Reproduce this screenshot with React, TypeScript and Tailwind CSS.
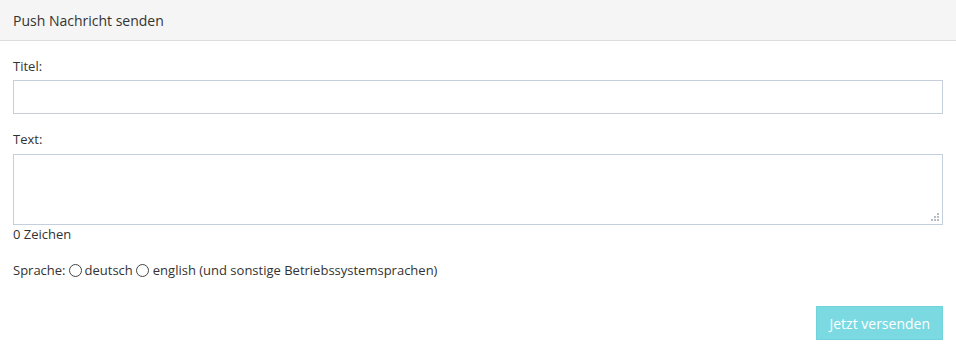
import React from "react";

export default function App() {
  return (
    <div className="w-[956px] h-[354px] bg-white text-[13px] text-[#333]" style={{ fontFamily: '"Open Sans", sans-serif' }}>
      <div className="h-[41px] bg-[#f5f5f5] border-b border-[#dddddd] flex items-center px-[13px] text-[14px] text-[#333]">
        Push Nachricht senden
      </div>
      <div className="px-[13px] pt-[16px]">
        <div className="leading-[18px] mb-[5px]">Titel:</div>
        <input type="text" className="block w-full h-[34px] border border-[#c5cfdc] bg-white outline-none" />
        <div className="leading-[18px] mt-[16px] mb-[6px]">Text:</div>
        <div className="relative">
          <textarea className="block w-full h-[71px] border border-[#c5cfdc] bg-white outline-none resize-none" />
          <svg className="absolute right-[4px] bottom-[4px]" width="8" height="8" viewBox="0 0 8 8">
            <rect x="6" y="0" width="2" height="2" fill="#b8bec8" />
            <rect x="3" y="3" width="2" height="2" fill="#b8bec8" />
            <rect x="6" y="3" width="2" height="2" fill="#b8bec8" />
            <rect x="0" y="6" width="2" height="2" fill="#b8bec8" />
            <rect x="3" y="6" width="2" height="2" fill="#b8bec8" />
            <rect x="6" y="6" width="2" height="2" fill="#b8bec8" />
          </svg>
        </div>
        <div className="leading-[18px]">0 Zeichen</div>
        <div className="leading-[18px] mt-[18px] flex items-center">
          <span>Sprache:</span>
          <span className="inline-block w-[13px] h-[13px] rounded-full border border-[#444] ml-[3px] mr-[3px]" />
          <span>deutsch</span>
          <span className="inline-block w-[13px] h-[13px] rounded-full border border-[#444] ml-[3px] mr-[4px]" />
          <span>english (und sonstige Betriebssystemsprachen)</span>
        </div>
        <div className="flex justify-end mt-[27px]">
          <button className="h-[34px] px-[12px] bg-[#7bd9e1] border border-[#6fd3dc] text-white text-[14px]">
            Jetzt versenden
          </button>
        </div>
      </div>
    </div>
  );
}
